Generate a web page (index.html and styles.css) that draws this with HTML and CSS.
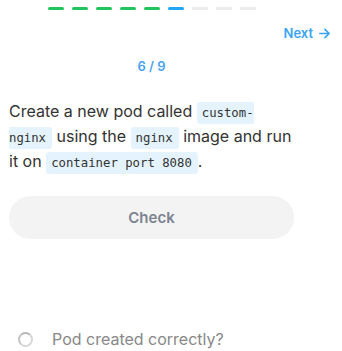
FILE: index.html
```html
<!DOCTYPE html>
<html>
<head>
    <title>Lesson step</title>
    <link rel="stylesheet" href="styles.css">
</head>
<body>
    <div class="progress">
        <span class="seg done"></span>
        <span class="seg done"></span>
        <span class="seg done"></span>
        <span class="seg done"></span>
        <span class="seg done"></span>
        <span class="seg current"></span>
        <span class="seg"></span>
        <span class="seg"></span>
        <span class="seg"></span>
    </div>

    <div class="nav">
        <a class="next" href="#">Next
            <svg width="13" height="13" viewBox="0 0 14 14" fill="none" stroke="currentColor" stroke-width="1.8" stroke-linecap="round" stroke-linejoin="round">
                <path d="M2 7h10M7.5 2.5L12 7l-4.5 4.5"/>
            </svg>
        </a>
    </div>

    <div class="main">
        <div class="counter">6 / 9</div>

        <p class="task">Create a new pod called <code>custom-nginx</code> using the <code>nginx</code> image and run it on <code>container port 8080</code>.</p>

        <button class="check-btn">Check</button>

        <ul class="checks">
            <li><span class="radio"></span>Pod created correctly?</li>
        </ul>
    </div>
</body>
</html>
```

FILE: styles.css
```css
body {
    margin: 0;
    font-family: Inter, "Noto Sans", sans-serif;
    background: #fff;
    color: #333;
}
.progress {
    width: 285px;
    margin-left: 9px;
    padding-top: 7px;
    display: flex;
    justify-content: center;
    gap: 8px;
}
.seg {
    width: 16px;
    height: 3px;
    border-radius: 2px;
    background: #ebebeb;
}
.seg.done {
    background: #22c55e;
}
.seg.current {
    background: #1ea7f2;
}
.nav {
    display: flex;
    justify-content: flex-end;
    padding: 15px 11px 0 0;
}
.next {
    display: flex;
    align-items: center;
    gap: 5px;
    color: #3aa4f4;
    font-size: 13px;
    font-weight: 600;
    text-decoration: none;
}
.main {
    width: 285px;
    margin-left: 9px;
}
.counter {
    text-align: center;
    color: #4ba3f2;
    font-size: 13px;
    font-weight: 600;
    margin-top: 17px;
}
.task {
    font-size: 16px;
    line-height: 25px;
    margin: 25px 0 0;
    color: #333;
}
code {
    font-family: "DejaVu Sans Mono", monospace;
    font-size: 12.3px;
    line-height: 1;
    background: #e4f3fd;
    color: #333;
    padding: 4px 6px 4px 5px;
    border-radius: 3px;
}
.check-btn {
    display: block;
    width: 285px;
    height: 43px;
    margin-top: 22px;
    border: none;
    border-radius: 22px;
    background: #f3f3f3;
    color: #7c8390;
    font-family: Inter, "Noto Sans", sans-serif;
    font-size: 15px;
    font-weight: 600;
}
.checks {
    list-style: none;
    margin: 90px 0 0;
    padding: 0 0 0 9px;
}
.checks li {
    display: flex;
    align-items: center;
    gap: 19px;
    font-size: 16px;
    color: #888;
}
.radio {
    width: 11px;
    height: 11px;
    border-radius: 50%;
    border: 2px solid #d6d6d6;
    border-top-color: #b8b8b8;
    border-left-color: #c2c2c2;
}
```
